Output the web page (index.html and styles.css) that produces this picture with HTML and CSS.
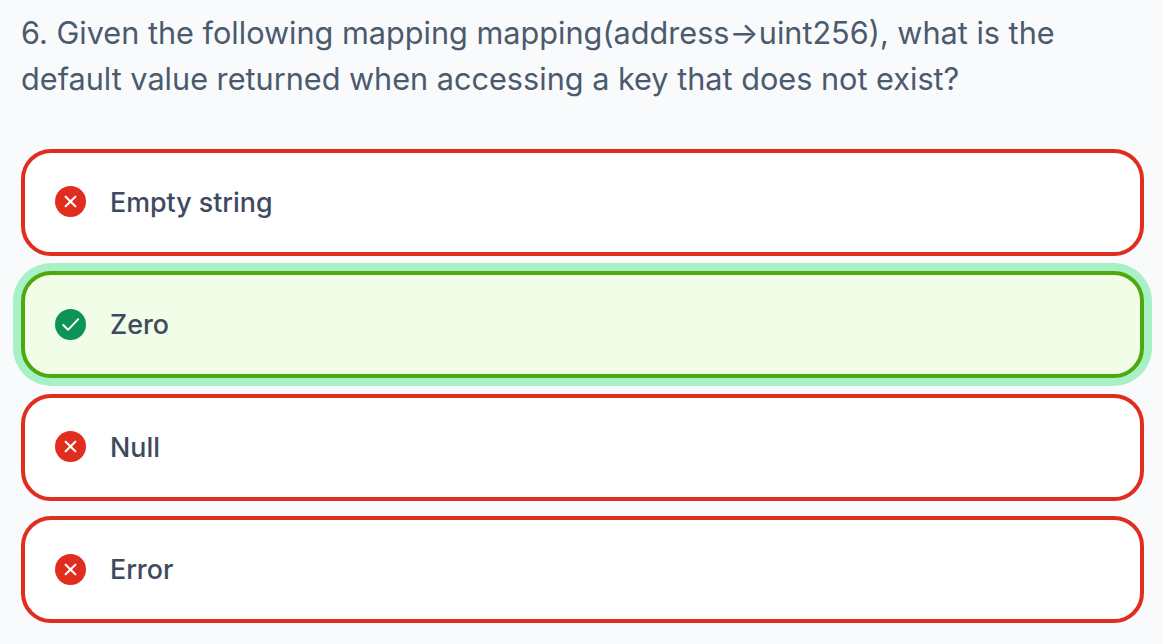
FILE: index.html
```html
<!DOCTYPE html>
<html>
<head>
    <link rel="stylesheet" href="styles.css">
</head>
<body>
    <div class="question">
        <h2 class="question-title">6. Given the following mapping mapping(address→uint256), what is the default value returned when accessing a key that does not exist?</h2>
        <div class="options">
            <div class="option wrong">
                <svg class="icon" viewBox="0 0 32 32"><circle cx="16" cy="16" r="16" fill="#e02d1f"/><path d="M11 11l10 10M21 11L11 21" stroke="#fff" stroke-width="2.200" stroke-linecap="round" fill="none"/></svg>
                <span>Empty string</span>
            </div>
            <div class="option correct">
                <svg class="icon" viewBox="0 0 32 32"><circle cx="16" cy="16" r="16" fill="#0e9356"/><path d="M8.500 16.500l5 5L24 10.500" stroke="#fff" stroke-width="2" stroke-linecap="round" stroke-linejoin="round" fill="none"/></svg>
                <span>Zero</span>
            </div>
            <div class="option wrong">
                <svg class="icon" viewBox="0 0 32 32"><circle cx="16" cy="16" r="16" fill="#e02d1f"/><path d="M11 11l10 10M21 11L11 21" stroke="#fff" stroke-width="2.200" stroke-linecap="round" fill="none"/></svg>
                <span>Null</span>
            </div>
            <div class="option wrong">
                <svg class="icon" viewBox="0 0 32 32"><circle cx="16" cy="16" r="16" fill="#e02d1f"/><path d="M11 11l10 10M21 11L11 21" stroke="#fff" stroke-width="2.200" stroke-linecap="round" fill="none"/></svg>
                <span>Error</span>
            </div>
        </div>
    </div>
</body>
</html>
```

FILE: styles.css
```css
body {
    margin: 0;
    background-color: #f9fafc;
    font-family: Inter, "Liberation Sans", sans-serif;
    overflow: hidden;
}

.question {
    padding: 10px 19px 0 21px;
}

.question-title {
    margin: 0 0 46.500px;
    font-size: 30.650px;
    line-height: 46px;
    font-weight: 400;
    color: #4b5a6c;
}

.options {
    display: flex;
    flex-direction: column;
    gap: 15.500px;
}

.option {
    display: flex;
    align-items: center;
    gap: 24px;
    height: 107px;
    box-sizing: border-box;
    padding: 0 0 1px 30px;
    border: 4px solid #e02d1f;
    border-radius: 30px;
    background: white;
    font-size: 26.800px;
    font-weight: 500;
    color: #3d4a60;
}

.option.correct {
    border-color: #4fa80d;
    background: #f1fde6;
    box-shadow: 0 0 0 8px #a8f0c6;
}

.icon {
    width: 31px;
    height: 31px;
    flex-shrink: 0;
}
```
